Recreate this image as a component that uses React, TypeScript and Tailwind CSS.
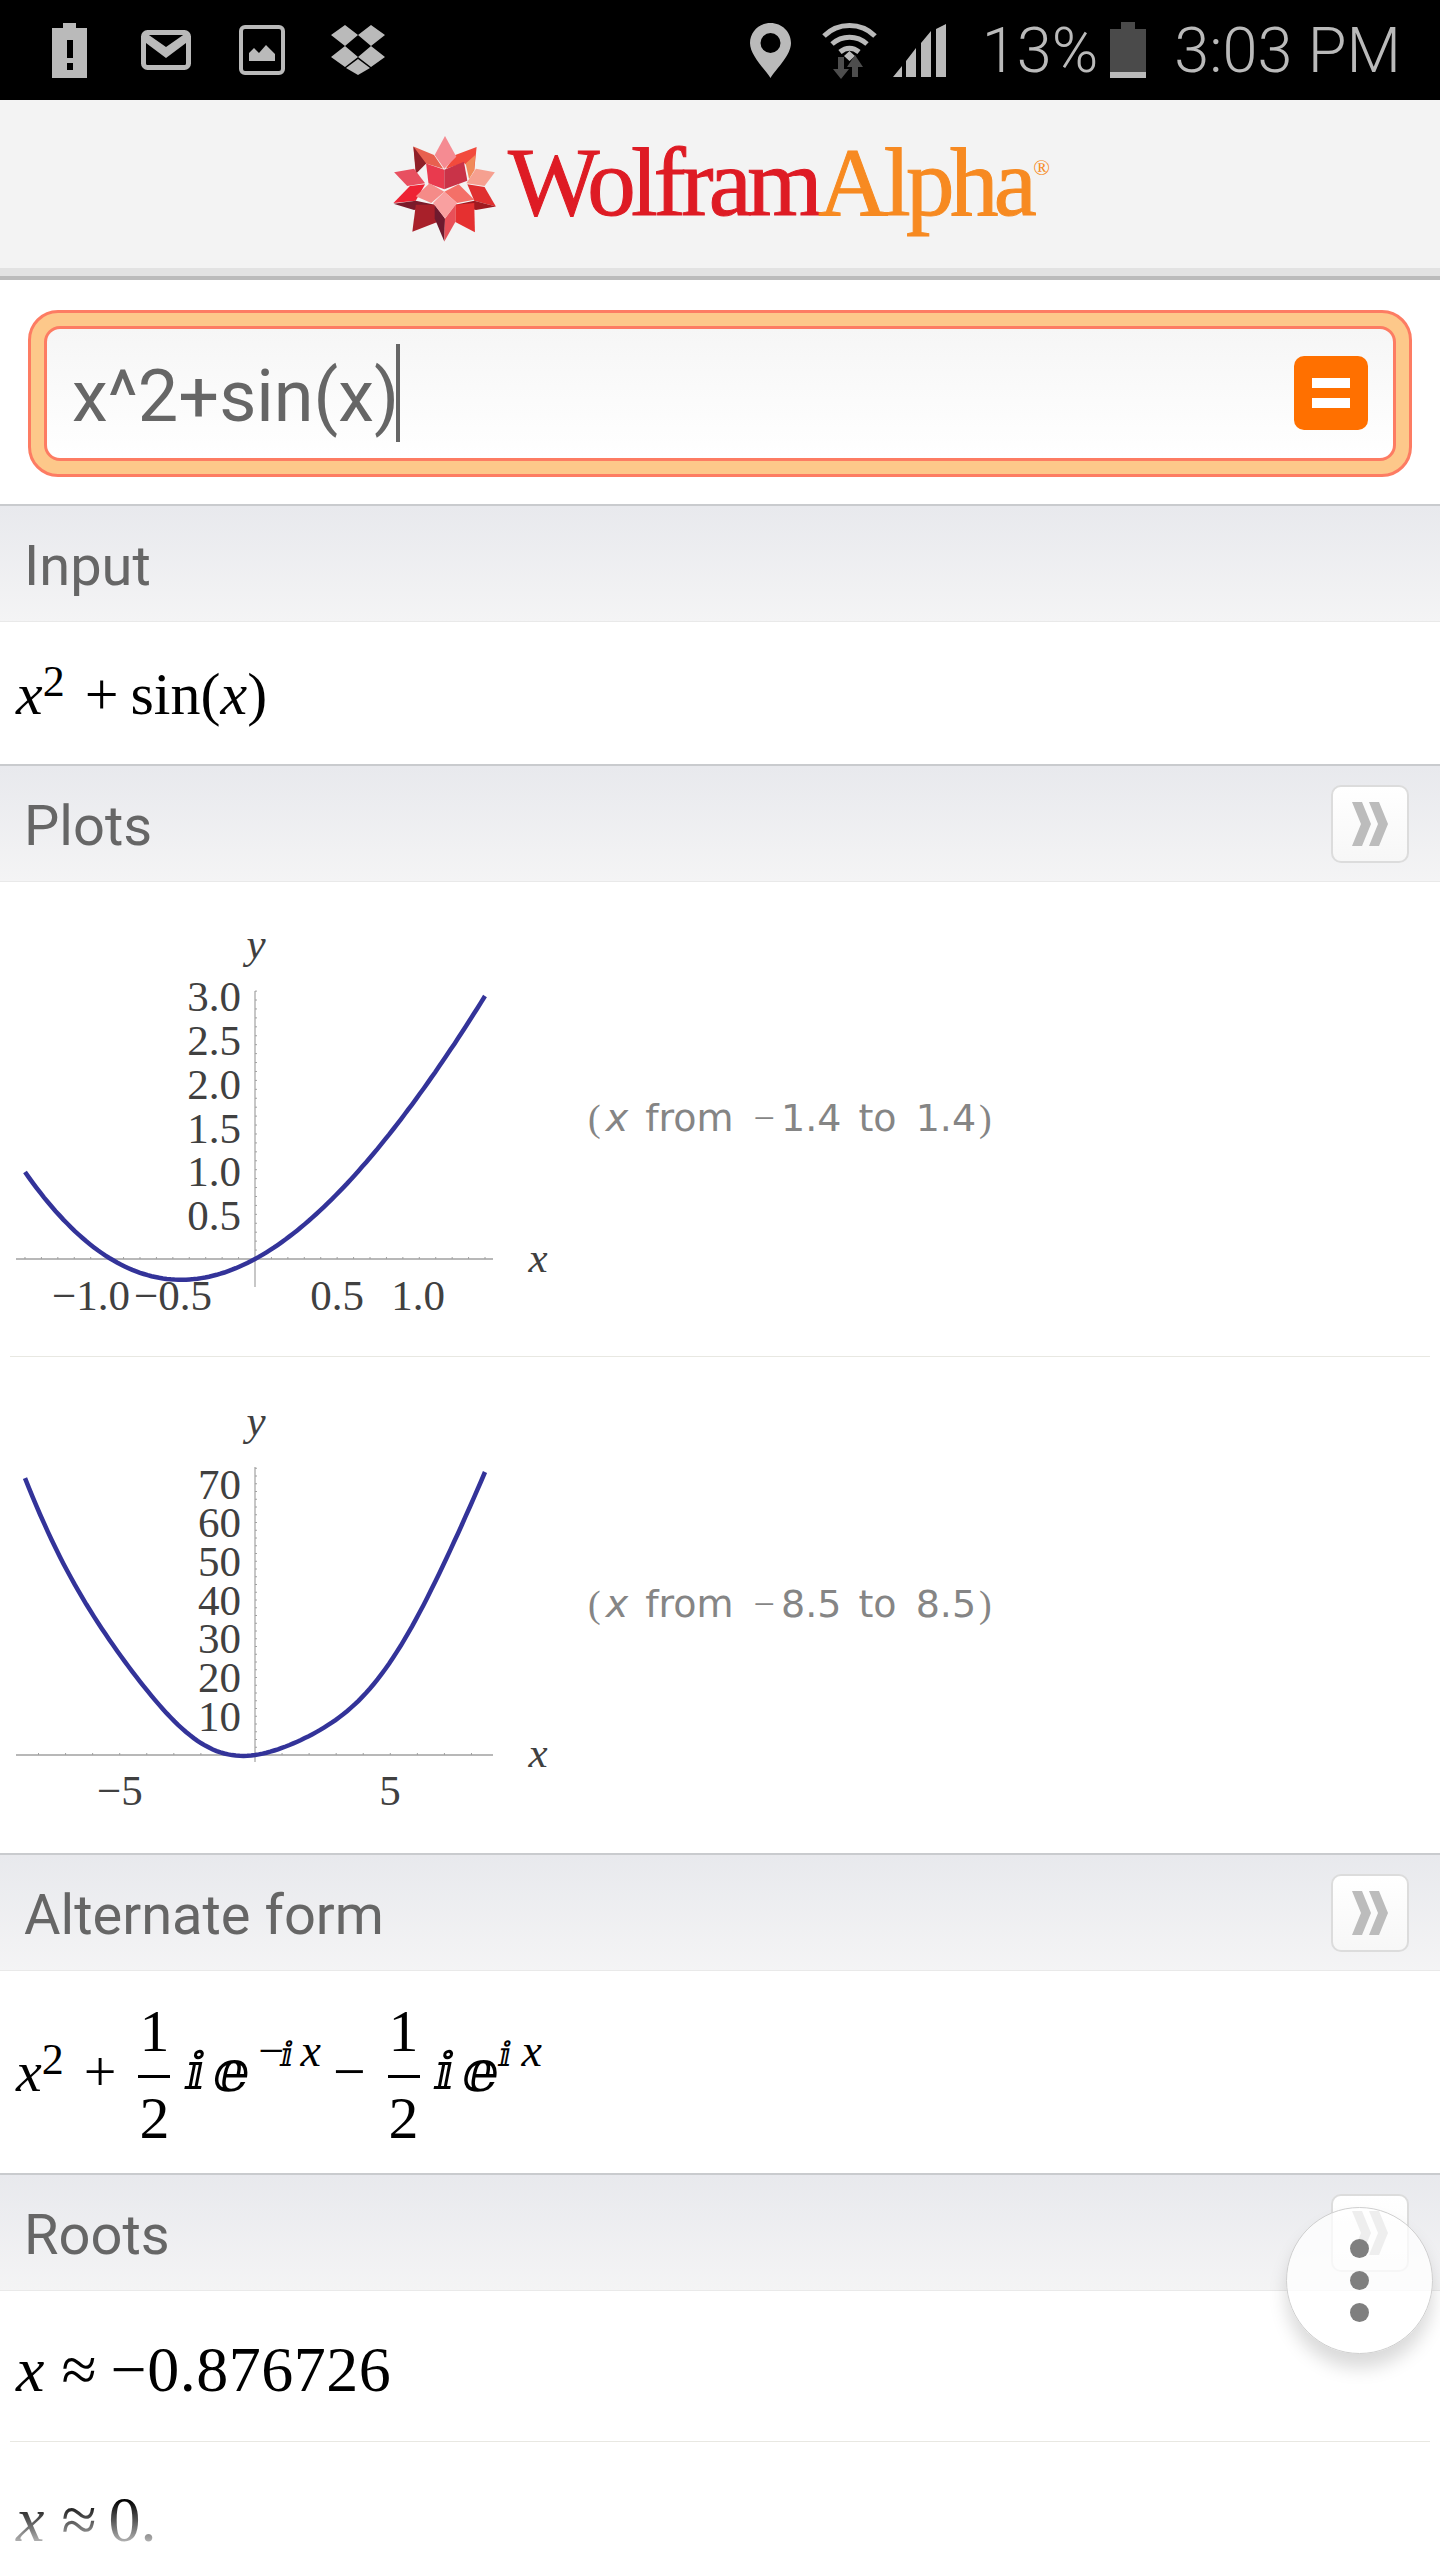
import type { ReactNode } from "react";

const serif = "font-['Liberation_Serif','DejaVu_Serif',serif]";

// plot curve, sampled from the function itself
function curvePath(
  from: number,
  to: number,
  originX: number,
  originY: number,
  scaleX: number,
  scaleY: number,
) {
  const pts: string[] = [];
  for (let i = 0; i <= 120; i++) {
    const x = from + ((to - from) * i) / 120;
    const y = x * x + Math.sin(x);
    pts.push(`${(originX + x * scaleX).toFixed(1)},${(originY - y * scaleY).toFixed(1)}`);
  }
  return "M" + pts.join("L");
}

function Chevrons() {
  return (
    <svg viewBox="0 0 36 44" className="h-[44px] w-[36px]">
      <path d="M0 0h10l9 22-9 22H0l9-22z" fill="#bcbcbc" />
      <path d="M17 0h10l9 22-9 22H17l9-22z" fill="#bcbcbc" />
    </svg>
  );
}

function SectionHeader({ title, more }: { title: string; more?: boolean }) {
  return (
    <div className="flex h-[118px] shrink-0 items-center justify-between border-t-2 border-b border-t-[#c9cbce] border-b-[#e9e9e9] bg-gradient-to-b from-[#e8e9ed] to-[#f4f4f5] pr-[31px] pl-[24px]">
      <span className="mt-[4px] font-['Roboto',sans-serif] text-[56px] leading-none text-[#666666]">{title}</span>
      {more && (
        <button className="flex h-[78px] w-[78px] items-center justify-center rounded-[10px] border-2 border-[#dcdcdc] bg-gradient-to-b from-white to-[#f7f7f7]">
          <Chevrons />
        </button>
      )}
    </div>
  );
}

function Var({ children }: { children: ReactNode }) {
  return <i className="italic">{children}</i>;
}

function Fraction() {
  return (
    <span className="mt-[4px] ml-[22px] flex w-[32px] flex-col items-center text-[60px] leading-[60px]">
      <span className="w-full border-b-[3px] border-black pb-[14px] text-center">1</span>
      <span className="pt-[10px]">2</span>
    </span>
  );
}

function ImaginaryPart({ minus }: { minus?: boolean }) {
  return (
    <>
      <span className="ml-[19px] flex w-[14px] justify-center text-[52px]">ⅈ</span>
      <span className="ml-[15px] flex w-[26px] justify-center">ⅇ</span>
      <span className={minus ? "mb-[42px] ml-[14px] flex items-baseline text-[46px]" : "mb-[42px] ml-[7px] flex items-baseline text-[46px]"}>
        {minus && <span className="w-[24px]">−</span>}
        <span className="flex w-[10px] justify-center text-[34px]">ⅈ</span>
        <span className={minus ? "ml-[8px]" : "ml-[11px]"}>
          <Var>x</Var>
        </span>
      </span>
    </>
  );
}

function WolframStar() {
  return (
    <svg viewBox="60 40 320 325" className="h-[113px] w-[110px] shrink-0">
      <polygon points="128,80 188,105 215,145 165,130 135,150" fill="#e8604f" />
      <polygon points="128,80 165,130 135,160" fill="#8f1f28" />
      <polygon points="312,82 250,105 222,145 275,128 305,150" fill="#f24a3c" />
      <polygon points="308,105 280,130 290,175 305,150" fill="#f08a5a" />
      <polygon points="72,155 130,145 162,187 110,195" fill="#e85060" />
      <polygon points="365,155 310,145 282,187 335,195" fill="#f6a090" />
      <polygon points="70,245 118,195 162,190 135,238" fill="#ee2233" />
      <polygon points="70,247 135,238 190,250 130,265" fill="#7a1a2a" />
      <polygon points="368,255 335,198 285,190 305,238" fill="#e03030" />
      <polygon points="368,255 305,238 250,250 310,265" fill="#a01a20" />
      <polygon points="125,328 135,250 190,250 198,300" fill="#a8202a" />
      <polygon points="307,330 250,300 250,250 305,245" fill="#e53030" />
      <polygon points="218,357 190,290 190,250 220,290" fill="#6e1a2e" />
      <polygon points="218,357 250,300 250,250 220,290" fill="#e85058" />
      <polygon points="165,130 218,148 218,205 172,188" fill="#e93a4e" />
      <polygon points="218,148 275,125 285,180 218,205" fill="#c93348" />
      <polygon points="220,50 253,110 218,145 190,105" fill="#f58b92" />
      <polygon points="135,225 175,187 218,212 180,245" fill="#f58b88" />
      <polygon points="218,212 260,190 305,235 255,245" fill="#f47068" />
      <polygon points="218,212 255,245 220,290 185,245" fill="#f9a0a0" />
    </svg>
  );
}

function StatusIcons() {
  return (
    <div className="flex items-center">
      {/* battery alert */}
      <svg viewBox="0 0 35 55" className="ml-[52px] h-[55px] w-[35px]">
        <path d="M11 0h13v5h11v50H0V5h11z" fill="#bababa" />
        <rect x="15" y="17" width="6" height="18" fill="#000" />
        <rect x="15" y="40" width="6" height="7" fill="#000" />
      </svg>
      {/* gmail */}
      <svg viewBox="0 0 50 40" className="ml-[54px] h-[40px] w-[50px]">
        <rect x="2.500" y="2.500" width="45" height="35" rx="4" fill="none" stroke="#bababa" strokeWidth="5" />
        <path d="M5 3l20 14L45 3v10L25 28 5 13z" fill="#bababa" />
      </svg>
      {/* gallery */}
      <svg viewBox="0 0 46 50" className="ml-[48px] h-[50px] w-[46px]">
        <rect x="2" y="2" width="42" height="46" rx="4" fill="none" stroke="#bababa" strokeWidth="4" />
        <path d="M10 36V28l5-5 5 5 7-8 9 9v7z" fill="#bababa" />
      </svg>
      {/* dropbox */}
      <svg viewBox="0 0 54 50" className="ml-[46px] h-[50px] w-[54px]" fill="#bababa">
        <path d="M14 0l13 10-13 11L0 10zM40 0l14 10-14 11-13-11z" />
        <path d="M14 21l13 11-13 10L0 32zM40 21l14 11-14 10-13-10z" />
        <path d="M27 34l12 9-12 7-12-7z" />
      </svg>
    </div>
  );
}

function StatusRight() {
  return (
    <div className="flex items-center">
      {/* location */}
      <svg viewBox="0 0 41 55" className="h-[55px] w-[41px]">
        <path
          fillRule="evenodd"
          d="M20.500 0C9 0 0 9 0 20c0 12 14 25 20.500 35C27 45 41 32 41 20 41 9 32 0 20.500 0zm0 10a10 10 0 110 20 10 10 0 010-20z"
          fill="#bababa"
        />
      </svg>
      {/* wifi with data arrows */}
      <svg viewBox="0 0 55 58" className="ml-[31px] h-[58px] w-[55px]">
        <g fill="none" stroke="#bababa" strokeWidth="5">
          <path d="M2 15C16 1 39 1 53 15" />
          <path d="M10 23c10-9 25-9 35 0" />
          <path d="M18 31c6-5 13-5 19 0" />
        </g>
        <path d="M22 35l5.500-5 5.500 5-5.500 5z" fill="#bababa" />
        <path d="M16 36h6v12h5l-8 10-8-10h5z" fill="#4d4d4d" />
        <path d="M33 34l8 12h-5v10h-6V46h-5z" fill="#4d4d4d" />
      </svg>
      {/* signal */}
      <svg viewBox="0 0 53 53" className="ml-[16px] h-[53px] w-[53px]" fill="#bababa">
        <path d="M0 53l9-11v11zM13 53V37l10-13v29zM28 53V19l10-12v46zM43 53V5l10-5v53z" />
      </svg>
      <span className="ml-[36px] font-['Roboto',sans-serif] text-[63px] leading-none font-light text-[#bababa]">13%</span>
      {/* battery level */}
      <svg viewBox="0 0 36 56" className="ml-[12px] h-[56px] w-[36px]">
        <path d="M11 0h14v7h11v43H0V7h11z" fill="#4a4a4a" />
        <rect y="50" width="36" height="6" fill="#bababa" />
      </svg>
      <span className="mr-[39px] ml-[28px] font-['Roboto',sans-serif] text-[63px] leading-none font-light text-[#bababa]">3:03 PM</span>
    </div>
  );
}

function Plot({
  height,
  top,
  path,
  xAxisY,
  axisTop,
  axisBottom,
  xTickStep,
  yTickStep,
  yLabels,
  xLabels,
  yLabelY,
  xLabelY,
  xLabelRowY,
}: {
  height: number;
  top: number;
  path: string;
  xAxisY: number;
  axisTop: number;
  axisBottom: number;
  xTickStep: number;
  yTickStep: number;
  yLabels: [string, number][];
  xLabels: [string, number][];
  yLabelY: number;
  xLabelY: number;
  xLabelRowY: number;
}) {
  const xTicks: number[] = [];
  for (let x = 255 - xTickStep; x > 16; x -= xTickStep) xTicks.push(x);
  for (let x = 255 + xTickStep; x < 493; x += xTickStep) xTicks.push(x);
  const yTicks: number[] = [];
  for (let y = xAxisY - yTickStep; y > axisTop; y -= yTickStep) yTicks.push(y);

  return (
    <svg
      viewBox={`0 ${top} 570 ${height}`}
      className="w-[570px] shrink-0"
      style={{ height }}
      fontFamily="'Liberation Serif',serif"
    >
      <line x1="16" x2="493" y1={xAxisY} y2={xAxisY} stroke="#a0a0a0" strokeWidth="1.5" />
      <line x1="255" x2="255" y1={axisTop} y2={axisBottom} stroke="#b4b4b4" strokeWidth="1.5" />
      {xTicks.map((x) => (
        <line key={x} x1={x} x2={x} y1={xAxisY - 2} y2={xAxisY} stroke="#a0a0a0" strokeWidth="1" />
      ))}
      {yTicks.map((y) => (
        <line key={y} x1="255" x2="257" y1={y} y2={y} stroke="#a0a0a0" strokeWidth="1" />
      ))}
      <path d={path} fill="none" stroke="#333399" strokeWidth="4.5" />
      {yLabels.map(([label, y]) => (
        <text key={label} x="241" y={y + 14} textAnchor="end" fontSize="43" fill="#404040">
          {label}
        </text>
      ))}
      {xLabels.map(([label, x]) => (
        <text key={label} x={x} y={xLabelRowY + 14} textAnchor="middle" fontSize="43" fill="#404040">
          {label}
        </text>
      ))}
      <text x="256" y={yLabelY + 8} textAnchor="middle" fontSize="43" fontStyle="italic" fill="#404040">
        y
      </text>
      <text x="538" y={xLabelY + 9} textAnchor="middle" fontSize="43" fontStyle="italic" fill="#404040">
        x
      </text>
    </svg>
  );
}

function RangeNote({ from, to }: { from: string; to: string }) {
  return (
    <span className="mb-[3px] ml-[18px] flex items-baseline font-['DejaVu_Sans',sans-serif] text-[38px] leading-none text-[#858585]">
      <span className={serif}>(</span>
      <i className="ml-[5px] italic">x</i>
      <span className="ml-[17px]">from</span>
      <span className={`ml-[20px] ${serif}`}>−</span>
      <span className="ml-[6px]">{from}</span>
      <span className="ml-[17px]">to</span>
      <span className="ml-[19px]">{to}</span>
      <span className={`ml-[3px] ${serif}`}>)</span>
    </span>
  );
}

export default function App() {
  const plotA = curvePath(-1.4, 1.4, 255, 1259, 164.3, 89.3);
  const plotB = curvePath(-8.5, 8.5, 255, 1755, 27.06, 3.874);

  return (
    <div className="relative flex h-[2560px] w-[1440px] flex-col overflow-hidden bg-white">
      {/* Status bar */}
      <div className="flex h-[100px] shrink-0 items-center justify-between bg-black">
        <StatusIcons />
        <StatusRight />
      </div>

      {/* Logo bar */}
      <div className="flex h-[176px] shrink-0 items-center justify-center border-b-[8px] border-[#e2e2e2] bg-[#f3f3f3] pt-[8px]">
        <WolframStar />
        <span className="mb-[12px] ml-[8px] flex items-start font-['Liberation_Serif',serif] text-[97px] leading-none tracking-[-4.6px] [-webkit-text-stroke:1px]">
          <span className="text-[#de1b24]">Wolfram</span>
          <span className="text-[#f78a21]">Alpha</span>
          <span className="mt-[23px] ml-[1px] text-[22px] tracking-normal text-[#f78a21] [-webkit-text-stroke:0px]">®</span>
        </span>
      </div>
      <div className="h-[4px] shrink-0 bg-[#bbbbbb]" />

      {/* Search box */}
      <div className="flex h-[224px] shrink-0 items-center px-[28px] pt-[2px]">
        <div className="flex h-[167px] w-full rounded-[30px] border-[3px] border-[#fd7c63] bg-[#fdc88a] p-[13px]">
          <div className="flex w-full items-center justify-between rounded-[16px] border-[3px] border-[#fd7c63] bg-gradient-to-b from-[#f6f6f6] to-white pr-[25px] pl-[25px]">
            <div className="flex items-center">
              <span className="pt-[8px] font-['Roboto',sans-serif] text-[72px] leading-none text-[#666666]">x^2+sin(x)</span>
              <div className="-ml-[3px] h-[98px] w-[4px] bg-[#666666]" />
            </div>
            <div className="flex h-[74px] w-[74px] flex-col items-center justify-center gap-[10px] rounded-[10px] bg-[#ff7000]">
              <div className="h-[10px] w-[38px] bg-white" />
              <div className="h-[10px] w-[38px] bg-white" />
            </div>
          </div>
        </div>
      </div>

      <SectionHeader title="Input" />
      <div className={`flex h-[142px] shrink-0 items-center pt-[2px] pl-[16px] text-[60px] leading-none text-black ${serif}`}>
        <Var>x</Var>
        <span className="mb-[24px] text-[44px]">2</span>
        <span className="ml-[20px]">+</span>
        <span className="ml-[12px]">sin(</span>
        <Var>x</Var>
        <span>)</span>
      </div>

      <SectionHeader title="Plots" more />
      {/* Plot rows */}
      <div className="flex h-[474px] shrink-0 items-center">
        <Plot
          top={883}
          height={473}
          path={plotA}
          xAxisY={1259}
          axisTop={991}
          axisBottom={1287}
          xTickStep={16.43}
          yTickStep={8.93}
          yLabels={[
            ["3.0", 997],
            ["2.5", 1041],
            ["2.0", 1085],
            ["1.5", 1129],
            ["1.0", 1172],
            ["0.5", 1216],
          ]}
          xLabels={[
            ["−1.0", 91],
            ["−0.5", 173],
            ["0.5", 337],
            ["1.0", 418],
          ]}
          yLabelY={950}
          xLabelY={1263}
          xLabelRowY={1296}
        />
        <RangeNote from="1.4" to="1.4" />
      </div>
      <div className="mx-[10px] h-px shrink-0 bg-[#e8e8e2]" />
      <div className="flex h-[496px] shrink-0 items-center">
        <Plot
          top={1358}
          height={495}
          path={plotB}
          xAxisY={1755}
          axisTop={1467}
          axisBottom={1762}
          xTickStep={27.06}
          yTickStep={7.75}
          yLabels={[
            ["70", 1485],
            ["60", 1523],
            ["50", 1562],
            ["40", 1601],
            ["30", 1639],
            ["20", 1678],
            ["10", 1717],
          ]}
          xLabels={[
            ["−5", 120],
            ["5", 390],
          ]}
          yLabelY={1427}
          xLabelY={1758}
          xLabelRowY={1791}
        />
        <RangeNote from="8.5" to="8.5" />
      </div>

      <SectionHeader title="Alternate form" more />
      <div className={`flex h-[202px] shrink-0 items-center pl-[16px] text-[58px] leading-none text-black ${serif}`}>
        <Var>x</Var>
        <span className="mb-[24px] text-[44px]">2</span>
        <span className="ml-[20px]">+</span>
        <Fraction />
        <ImaginaryPart minus />
        <span className="ml-[12px]">−</span>
        <Fraction />
        <ImaginaryPart />
      </div>

      <SectionHeader title="Roots" more />
      <div className={`flex h-[150px] shrink-0 items-center pt-[8px] pl-[16px] text-[64px] leading-none text-black ${serif}`}>
        <Var>x</Var>
        <span className="ml-[17px]">≈</span>
        <span className="ml-[14px] tracking-[0.5px]">−0.876726</span>
      </div>
      <div className="mx-[10px] h-px shrink-0 bg-[#e8e8e2]" />
      <div className={`flex h-[118px] shrink-0 items-center pt-[38px] pl-[16px] text-[64px] leading-none text-black ${serif}`}>
        <Var>x</Var>
        <span className="ml-[17px]">≈</span>
        <span className="ml-[12px]">0.</span>
      </div>

      {/* Fade over the last row, at the bottom edge of the screen */}
      <div className="absolute inset-x-0 bottom-0 h-[60px] bg-gradient-to-b from-white/0 to-white" />

      {/* Floating menu button */}
      <div className="absolute top-[2207px] left-[1286px] flex h-[147px] w-[147px] flex-col items-center justify-center gap-[13px] rounded-full border-[1.5px] border-[#cfcfcf] bg-white/75 shadow-[0_14px_18px_rgba(0,0,0,0.15)]">
        <div className="h-[19px] w-[19px] rounded-full bg-[#7f7f7f]" />
        <div className="h-[19px] w-[19px] rounded-full bg-[#7f7f7f]" />
        <div className="h-[19px] w-[19px] rounded-full bg-[#7f7f7f]" />
      </div>
    </div>
  );
}
